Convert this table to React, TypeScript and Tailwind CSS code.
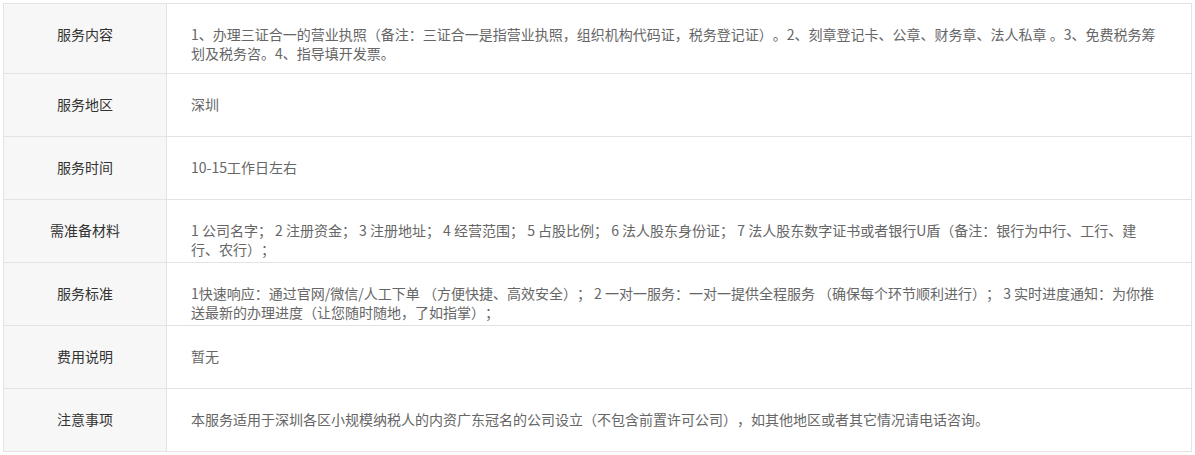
import React from "react";

const rows: { label: string; h: string; content: React.ReactNode }[] = [
  {
    label: "服务内容",
    h: "h-[69px]",
    content: (
      <>
        1、办理三证合一的营业执照（备注：三证合一是指营业执照，组织机构代码证，税务登记证）。2、刻章登记卡、公章、财务章、法人私章 。3、免费税务筹
        <br />
        划及税务咨。4、指导填开发票。
      </>
    ),
  },
  { label: "服务地区", h: "h-[63px] border-t", content: "深圳" },
  { label: "服务时间", h: "h-[63px] border-t", content: "10-15工作日左右" },
  {
    label: "需准备材料",
    h: "h-[63px] border-t",
    content: (
      <>
        1 公司名字； 2 注册资金； 3 注册地址； 4 经营范围； 5 占股比例； 6 法人股东身份证； 7 法人股东数字证书或者银行U盾（备注：银行为中行、工行、建
        <br />
        行、农行）；
      </>
    ),
  },
  {
    label: "服务标准",
    h: "h-[63px] border-t",
    content: (
      <>
        1快速响应：通过官网/微信/人工下单 （方便快捷、高效安全）； 2 一对一服务：一对一提供全程服务 （确保每个环节顺利进行）； 3 实时进度通知：为你推
        <br />
        送最新的办理进度（让您随时随地，了如指掌）；
      </>
    ),
  },
  { label: "费用说明", h: "h-[63px] border-t", content: "暂无" },
  {
    label: "注意事项",
    h: "h-[63px] border-t",
    content:
      "本服务适用于深圳各区小规模纳税人的内资广东冠名的公司设立（不包含前置许可公司），如其他地区或者其它情况请电话咨询。",
  },
];

export default function App() {
  return (
    <div
      className="bg-white p-[3px] text-[14px] leading-[19px] [text-spacing-trim:space-all]"
      style={{ fontFamily: '"Noto Sans CJK SC", "Noto Sans", sans-serif' }}
    >
      <div className="border border-[#e3e3e3]">
        {rows.map((r) => (
          <div key={r.label} className={`flex border-[#e3e3e3] ${r.h}`}>
            <div className="w-[163px] shrink-0 border-r border-[#e3e3e3] bg-[#f7f7f7] pt-[21px] text-center text-[#333]">
              {r.label}
            </div>
            <div className="flex-1 overflow-hidden px-[24px] pt-[21px] text-[#666]">
              {r.content}
            </div>
          </div>
        ))}
      </div>
    </div>
  );
}
